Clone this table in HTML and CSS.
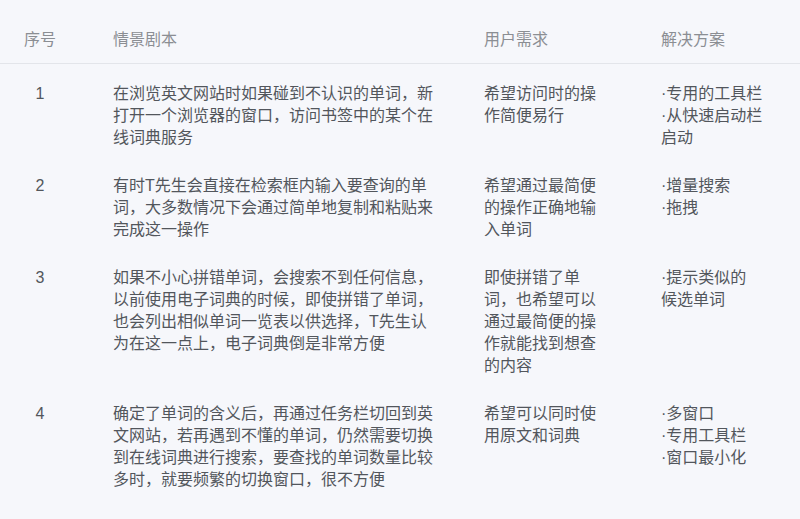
FILE: index.html
```html
<!DOCTYPE html>
<html lang="zh-CN">
<head>
<meta charset="utf-8">
<title>情景剧本</title>
<link rel="stylesheet" href="styles.css">
</head>
<body>
<table class="scenario">
  <thead>
    <tr>
      <th class="c-no">序号</th>
      <th class="c-story">情景剧本</th>
      <th class="c-need">用户需求</th>
      <th class="c-sol">解决方案</th>
    </tr>
  </thead>
  <tbody>
    <tr>
      <td class="c-no">1</td>
      <td class="c-story">在浏览英文网站时如果碰到不认识的单词，新<br>打开一个浏览器的窗口，访问书签中的某个在<br>线词典服务</td>
      <td class="c-need">希望访问时的操<br>作简便易行</td>
      <td class="c-sol">·专用的工具栏<br>·从快速启动栏<br>启动</td>
    </tr>
    <tr>
      <td class="c-no">2</td>
      <td class="c-story">有时T先生会直接在检索框内输入要查询的单<br>词，大多数情况下会通过简单地复制和粘贴来<br>完成这一操作</td>
      <td class="c-need">希望通过最简便<br>的操作正确地输<br>入单词</td>
      <td class="c-sol">·增量搜索<br>·拖拽</td>
    </tr>
    <tr>
      <td class="c-no">3</td>
      <td class="c-story">如果不小心拼错单词，会搜索不到任何信息，<br>以前使用电子词典的时候，即使拼错了单词，<br>也会列出相似单词一览表以供选择，T先生认<br>为在这一点上，电子词典倒是非常方便</td>
      <td class="c-need">即使拼错了单<br>词，也希望可以<br>通过最简便的操<br>作就能找到想查<br>的内容</td>
      <td class="c-sol">·提示类似的<br>候选单词</td>
    </tr>
    <tr>
      <td class="c-no">4</td>
      <td class="c-story">确定了单词的含义后，再通过任务栏切回到英<br>文网站，若再遇到不懂的单词，仍然需要切换<br>到在线词典进行搜索，要查找的单词数量比较<br>多时，就要频繁的切换窗口，很不方便</td>
      <td class="c-need">希望可以同时使<br>用原文和词典</td>
      <td class="c-sol">·多窗口<br>·专用工具栏<br>·窗口最小化</td>
    </tr>
  </tbody>
</table>
</body>
</html>
```

FILE: styles.css
```css
html, body {
  margin: 0;
  padding: 0;
  background: #f6f7fb;
}

body {
  font-family: "Liberation Sans", "Noto Sans CJK SC", sans-serif;
  font-size: 16px;
  line-height: 22px;
  color: #52565c;
}

.scenario {
  width: 800px;
  border-collapse: collapse;
  table-layout: fixed;
}

.scenario th,
.scenario td {
  text-align: left;
  vertical-align: top;
  white-space: nowrap;
}

.scenario th {
  font-weight: normal;
  color: #8b8e93;
  padding-top: 29px;
  padding-bottom: 12px;
  border-bottom: 1px solid #e3e5ea;
}

.scenario td {
  padding-top: 19px;
  padding-bottom: 7px;
}

.scenario .c-no {
  width: 80px;
  padding-left: 0;
  text-align: center;
}

.scenario .c-story {
  width: 337px;
  padding-left: 32px;
}

.scenario .c-need {
  width: 142px;
  padding-left: 33px;
}

.scenario .c-sol {
  width: auto;
  padding-left: 34px;
}
```
